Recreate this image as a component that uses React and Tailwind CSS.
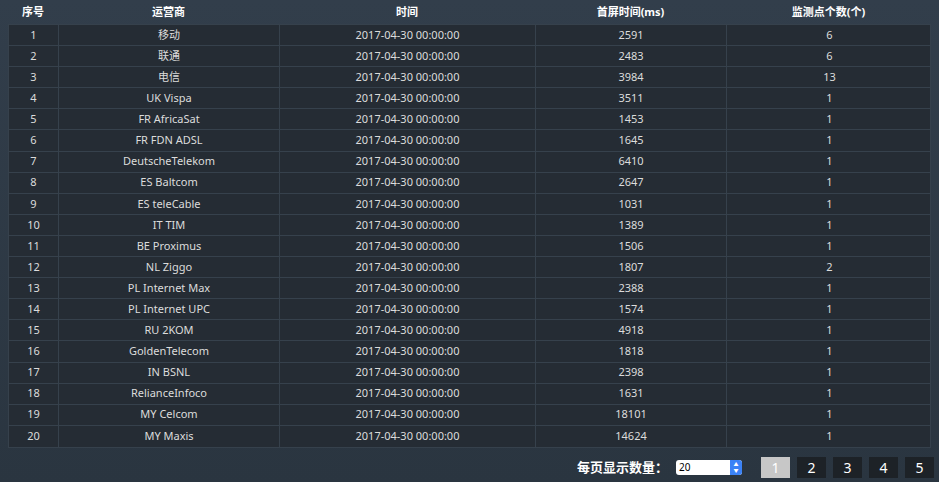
const rows = [
["移动","2591","6"],["联通","2483","6"],["电信","3984","13"],["UK Vispa","3511","1"],["FR AfricaSat","1453","1"],["FR FDN ADSL","1645","1"],["DeutscheTelekom","6410","1"],["ES Baltcom","2647","1"],["ES teleCable","1031","1"],["IT TIM","1389","1"],["BE Proximus","1506","1"],["NL Ziggo","1807","2"],["PL Internet Max","2388","1"],["PL Internet UPC","1574","1"],["RU 2KOM","4918","1"],["GoldenTelecom","1818","1"],["IN BSNL","2398","1"],["RelianceInfoco","1631","1"],["MY Celcom","18101","1"],["MY Maxis","14624","1"]];
const cols = "grid grid-cols-[50px_221px_256px_191px_205px]";
export default function App(){
  return (
    <div className="w-[939px] h-[482px] bg-gradient-to-b from-[#323e4b] to-[#2a3540] text-[#e6e6e6] text-[11px] overflow-hidden" style={{fontFamily:'"Noto Sans","Noto Sans CJK SC",sans-serif'}}>
      <div className="ml-[8px] w-[923px]">
        <div className={cols+" h-[24px] items-center font-bold text-white text-[11px]"}>
          {["序号","运营商","时间","首屏时间(ms)","监测点个数(个)"].map((h,i)=>(
            <div key={i} className="text-center">{h}</div>))}
        </div>
        <div className="bg-[#252c34] border border-[#36414c]">
          {rows.map((r,i)=>(
            <div key={i} className={cols+" h-[21.1px] items-center border-b border-[#36414c] last:border-b-0 text-[#dcdcdc]"}>
              <div className="text-center border-r border-[#36414c] h-full flex items-center justify-center">{i+1}</div>
              <div className="text-center border-r border-[#36414c] h-full flex items-center justify-center">{r[0]}</div>
              <div className="text-center border-r border-[#36414c] h-full flex items-center justify-center">2017-04-30 00:00:00</div>
              <div className="text-center border-r border-[#36414c] h-full flex items-center justify-center">{r[1]}</div>
              <div className="text-center h-full flex items-center justify-center">{r[2]}</div>
            </div>))}
        </div>
      </div>
      <div className="flex items-center justify-end mt-[9px] pr-[5px]">
        <span className="font-bold text-[13px] text-white mr-[8px]">每页显示数量：</span>
        <div className="w-[66px] h-[15px] bg-white rounded-[3px] flex items-center justify-between text-black text-[10px] pl-[3px] mr-[19px]">
          <span>20</span>
          <div className="w-[12px] h-[15px] bg-[#3b82f6] rounded-r-[3px] flex flex-col items-center justify-center text-white text-[5px] leading-[6px]"><span>▲</span><span>▼</span></div>
        </div>
        <div className="flex gap-[7px]">
          {[1,2,3,4,5].map(n=>(
            <div key={n} className={"w-[29px] h-[21px] flex items-center justify-center text-[14px] "+(n===1?"bg-[#c7c7c7] text-white":"bg-[#1d2227] text-white")}>{n}</div>))}
        </div>
      </div>
    </div>
  );
}
